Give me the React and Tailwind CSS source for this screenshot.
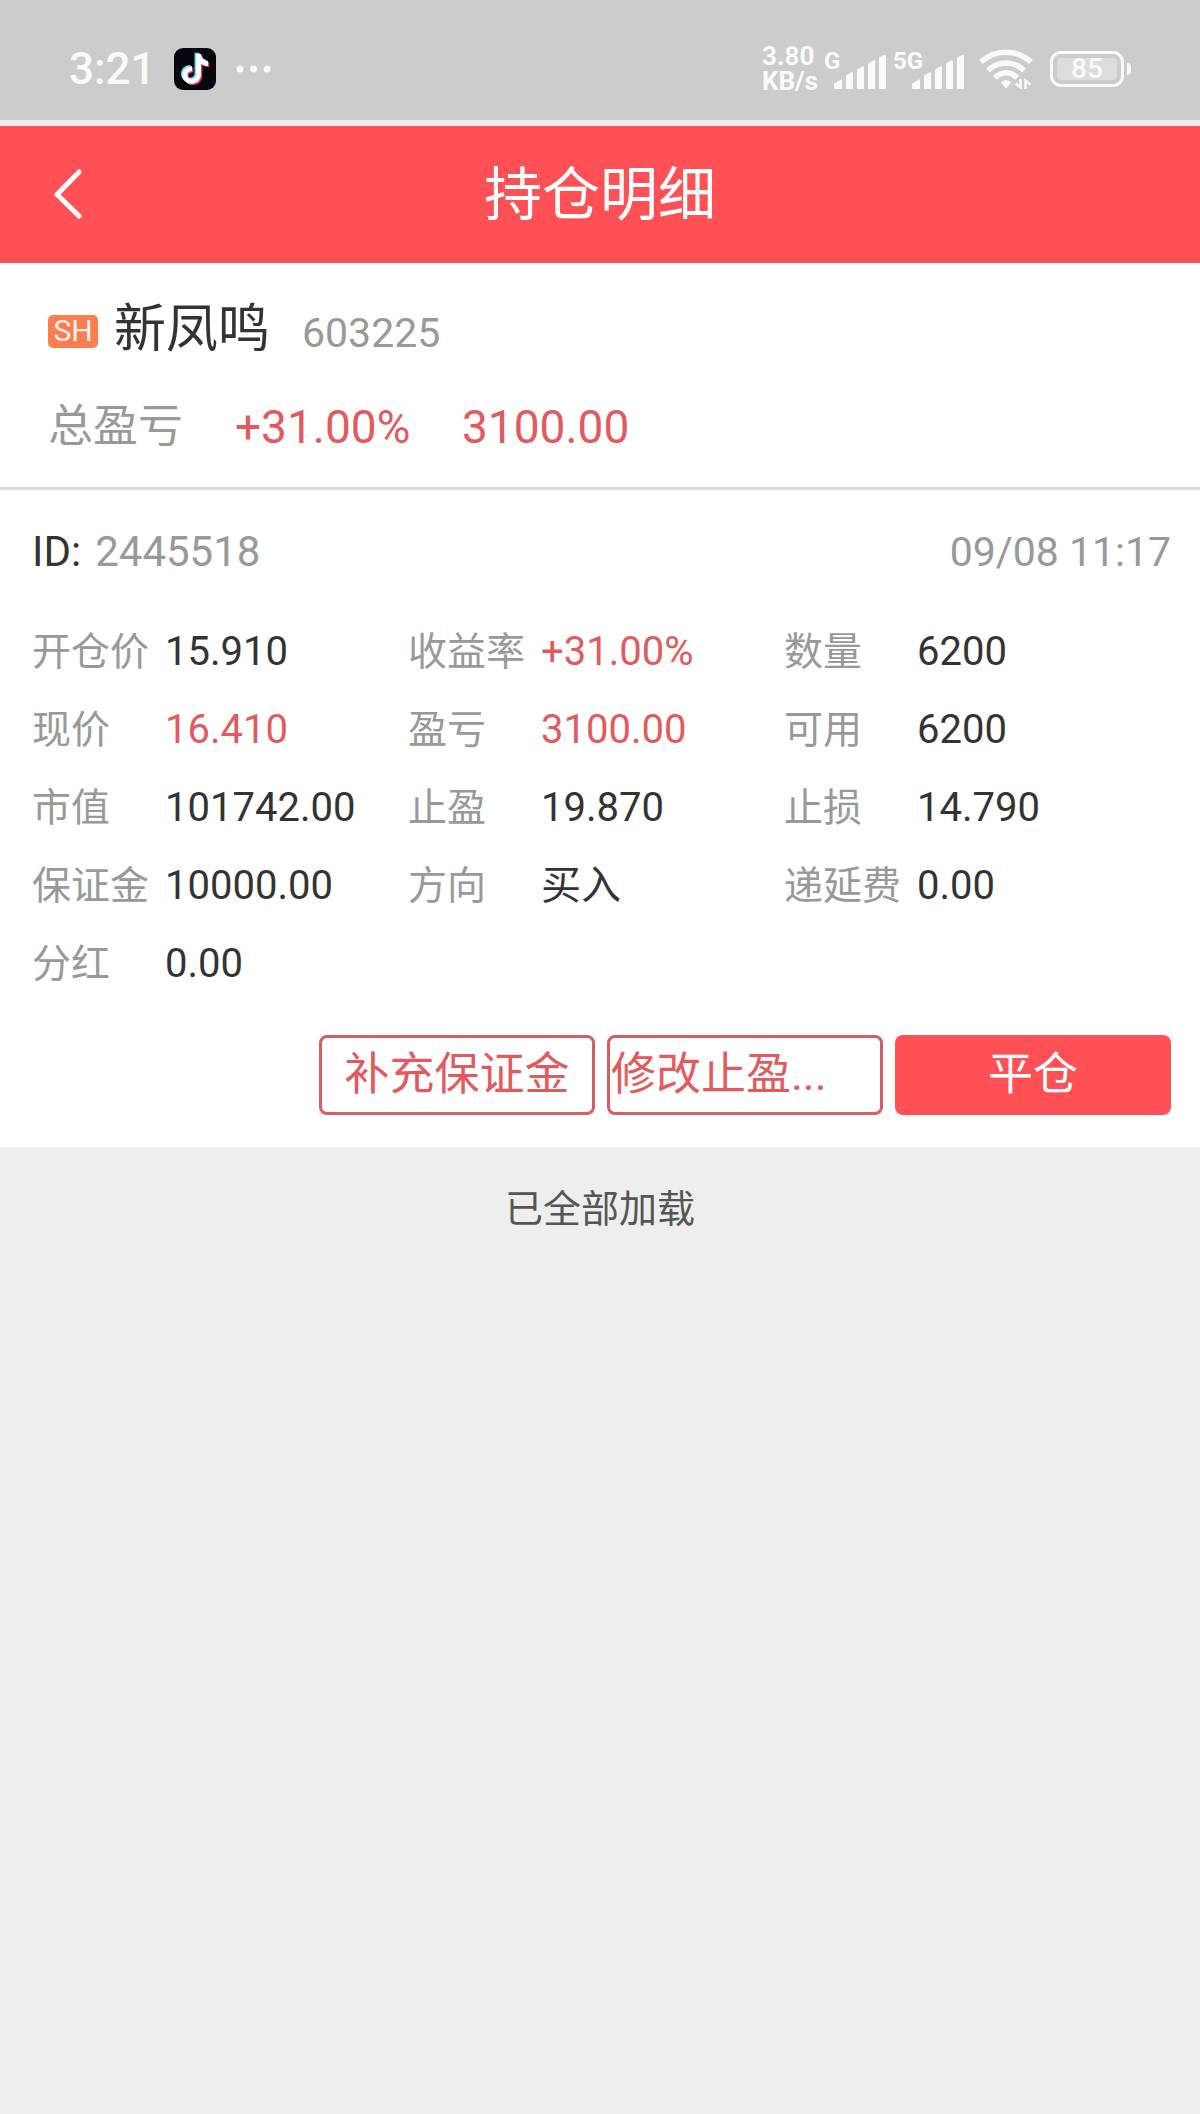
const FIELDS = [
  { label: '开仓价', value: '15.910' },
  { label: '收益率', value: '+31.00%', up: true },
  { label: '数量', value: '6200' },
  { label: '现价', value: '16.410', up: true },
  { label: '盈亏', value: '3100.00', up: true },
  { label: '可用', value: '6200' },
  { label: '市值', value: '101742.00' },
  { label: '止盈', value: '19.870' },
  { label: '止损', value: '14.790' },
  { label: '保证金', value: '10000.00' },
  { label: '方向', value: '买入' },
  { label: '递延费', value: '0.00' },
  { label: '分红', value: '0.00' },
];

function NoteIcon() {
  const note =
    'M22 6h5c.5 4 3 6.500 7 7v5c-3 0-5-.8-7-2.200V26c0 6-4.200 9.800-9.400 9.800S8.500 32 8.500 27s4-9 9.500-8.800v5.200c-2.800-.3-4.600 1.300-4.600 3.600s1.800 3.900 4.200 3.900c2.700 0 4.400-1.700 4.400-4.600z';
  return (
    <svg viewBox="0 0 42 42" className="size-[42px]" aria-label="抖音">
      <rect width="42" height="42" rx="9" fill="#06060f" />
      <path d={note} fill="#5fe3dc" transform="translate(-1.500 -1.200)" />
      <path d={note} fill="#e83a5f" transform="translate(1.300 1.200)" />
      <path d={note} fill="#fff" />
    </svg>
  );
}

function Signal({ label, className }) {
  return (
    <div className={`relative h-10 ${className}`}>
      <span className="absolute top-0 left-0 text-[24px] leading-6 font-bold">{label}</span>
      <svg viewBox="0 0 52 34" className="absolute right-0 bottom-0 h-[34px] w-[52px]" fill="currentColor">
        <path d="M0 30c0-1 0-1.500 1-2l6-3.500c.8-.4 1 0 1 1V33c0 .6-.4 1-1 1H1.500C.5 34 0 33.500 0 32.500z" />
        <path d="M12 22c0-1 0-1.500 1-2l4-2.500c.8-.4 2 0 2 1V33c0 .6-.4 1-1 1h-5c-.6 0-1-.4-1-1z" />
        <path d="M23 16c0-1 0-1.500 1-2l4-2.500c.8-.4 2 0 2 1V33c0 .6-.4 1-1 1h-5c-.6 0-1-.4-1-1z" />
        <path d="M34 10c0-1 0-1.500 1-2l4-2.500c.8-.4 2 0 2 1V33c0 .6-.4 1-1 1h-5c-.6 0-1-.4-1-1z" />
        <path d="M45 4c0-1 0-1.500 1-2l4-2c.8-.4 2 0 2 1v32c0 .6-.4 1-1 1h-5c-.6 0-1-.4-1-1z" />
      </svg>
    </div>
  );
}

function WifiIcon() {
  return (
    <svg viewBox="0 0 54 40" className="h-10 w-[54px]" fill="none" stroke="currentColor">
      <path d="M2 13C16 0 38 0 52 13" strokeWidth="5.500" />
      <path d="M9 21.500C19 11.500 35 11.500 45 21.500" strokeWidth="5.500" />
      <path d="M16 29C22 22 32 22 38 29" strokeWidth="5.500" />
      <path d="M22 33.500c2-3.500 8-3.500 10 0l-4 5c-.6.7-1.400.7-2 0z" fill="currentColor" stroke="none" />
      <path d="M36.500 34.500l5 4V30M46.500 40V31.500l5 4" strokeWidth="2.500" />
    </svg>
  );
}

function Battery() {
  return (
    <div className="flex items-center gap-[3px]">
      <div className="flex h-9 w-[74px] rounded-[11px] border-[3px] border-current p-1">
        <span className="flex flex-1 items-center justify-center rounded bg-[#dcdcdc] text-[28px] leading-6 font-medium">
          85
        </span>
      </div>
      <span className="h-3 w-1 rounded-r bg-current" />
    </div>
  );
}

function StatusBar() {
  return (
    <div className="flex h-[126px] items-center justify-between border-b-[6px] border-[#f4ebf4] bg-[#cccccc] px-[69px] pt-[18px] text-[#fafafa]">
      <div className="flex items-center">
        <span className="w-[105px] text-[44px] leading-[44px] font-medium">3:21</span>
        <NoteIcon />
        <svg viewBox="0 0 36 8" className="ml-5 h-2 w-9" fill="currentColor">
          <circle cx="4" cy="4" r="3.500" />
          <circle cx="17.500" cy="4" r="3.500" />
          <circle cx="31" cy="4" r="3.500" />
        </svg>
      </div>
      <div className="flex items-center">
        <div className="w-[62px] text-[26px] leading-[25px] font-bold">
          <div>3.80</div>
          <div>KB/s</div>
        </div>
        <Signal label="G" className="w-[62px]" />
        <Signal label="5G" className="ml-[7px] w-[71px]" />
        <div className="mr-[17px] ml-[15px]">
          <WifiIcon />
        </div>
        <Battery />
      </div>
    </div>
  );
}

export default function App() {
  return (
    <div className="min-h-screen bg-[#eeeeee] font-['Roboto','Noto_Sans_CJK_SC',sans-serif] text-[#333333]">
      <StatusBar />

      <header className="grid h-[137px] grid-cols-[1fr_auto_1fr] items-center bg-[#ff5155] px-[52px] text-white">
        <button type="button" aria-label="返回" className="w-fit">
          <svg viewBox="0 0 32 52" className="h-[52px] w-8" fill="none" stroke="currentColor" strokeWidth="5" strokeLinecap="round" strokeLinejoin="round">
            <path d="M27 3L5 25.500L27 47" />
          </svg>
        </button>
        <h1 className="text-[58px] leading-[72px]">持仓明细</h1>
      </header>

      <section className="border-b-[3px] border-[#dcdcdc] bg-white px-12 pt-7 pb-5">
        <div className="flex h-20 items-center">
          <span className="flex h-[33px] w-[50px] items-center justify-center rounded-[5px] bg-[#fb7e52] text-[30px] leading-8 text-[#fff3ea]">
            SH
          </span>
          <div className="ml-4 flex items-baseline gap-8">
            <h2 className="text-[52px] leading-[64px]">新凤鸣</h2>
            <span className="text-[41px] leading-[64px] text-[#999999]">603225</span>
          </div>
        </div>
        <div className="mt-4 flex h-20 items-center text-[46px] leading-[60px] text-[#e25a5e]">
          <span className="w-[187px] text-[45px] text-[#999999]">总盈亏</span>
          <span className="w-[227px]">+31.00%</span>
          <span>3100.00</span>
        </div>
      </section>

      <section className="bg-white py-8 pr-[29px] pl-8">
        <div className="flex h-[60px] items-center justify-between text-[42px] leading-[60px]">
          <div className="flex gap-[14px]">
            <span>ID:</span>
            <span className="text-[#999999]">2445518</span>
          </div>
          <time className="text-[41px] text-[#999999]">09/08 11:17</time>
        </div>
        <dl className="mt-[31px] mr-[11px] grid grid-cols-3">
          {FIELDS.map((field) => (
            <div key={field.label} className="flex h-[78px] items-center text-[40px] leading-[60px]">
              <dt className="w-[133px] shrink-0 text-[39px] text-[#999999]">{field.label}</dt>
              <dd className={field.up ? 'text-[#e25a5e]' : ''}>{field.value}</dd>
            </div>
          ))}
        </dl>
        <div className="mt-8 flex justify-end gap-3 text-[45px] leading-[60px]">
          <button type="button" className="h-20 w-[276px] rounded-lg border-[3px] border-[#d15f65] text-[#e25a5e]">
            补充保证金
          </button>
          <button type="button" className="h-20 w-[276px] rounded-lg border-[3px] border-[#d15f65] pl-px text-left text-[#e25a5e]">
            修改止盈...
          </button>
          <button type="button" className="h-20 w-[276px] rounded-lg bg-[#ff5155] text-white">
            平仓
          </button>
        </div>
      </section>

      <p className="pt-8 text-center text-[38px] leading-[60px] text-[#555555]">已全部加载</p>
    </div>
  );
}
